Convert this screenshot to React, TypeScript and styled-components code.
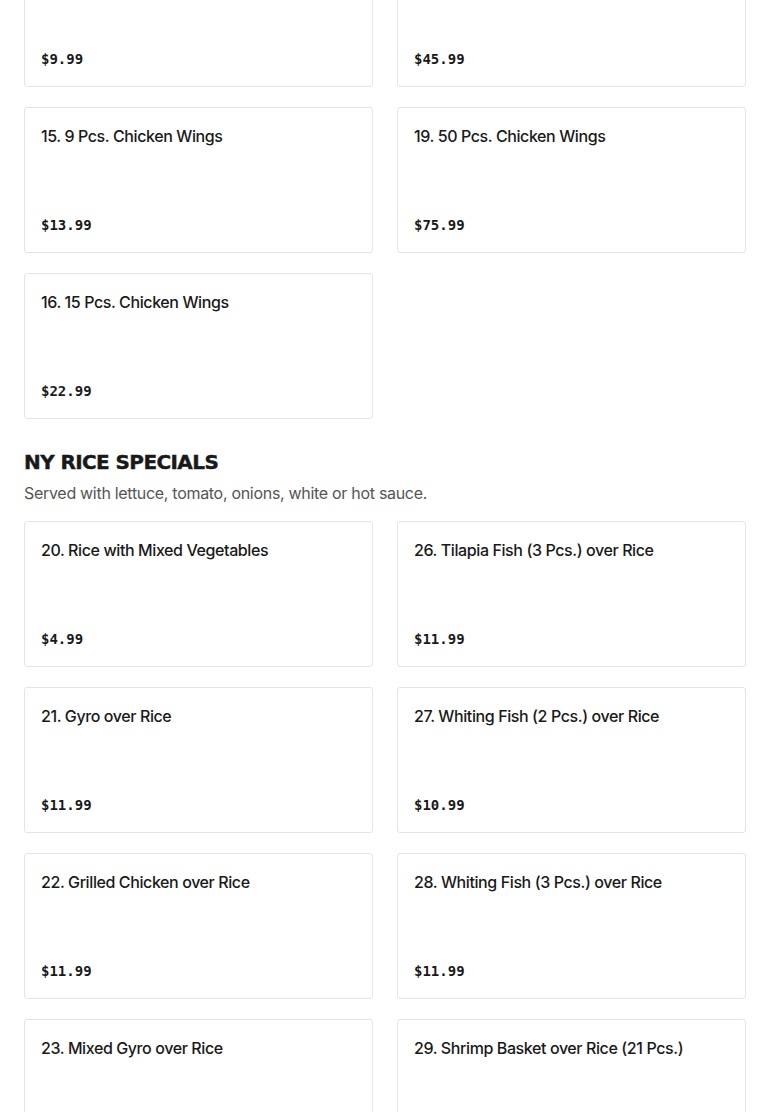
import React from "react";
import styled, { createGlobalStyle } from "styled-components";

const GlobalStyle = createGlobalStyle`
  html, body { margin: 0; padding: 0; background: #ffffff; }
  body { font-family: Inter, "Noto Sans", sans-serif; color: #191919; }
  * { box-sizing: border-box; }
`;

const Page = styled.div`
  padding: 0 24px;
  margin-top: -59px;
  display: flex;
  flex-direction: column;
`;

const Section = styled.section<{ $first?: boolean }>`
  display: flex;
  flex-direction: column;
  margin-top: ${(p) => (p.$first ? "0" : "29px")};
`;

const Heading = styled.h2`
  margin: 0;
  font-family: "DejaVu Sans", sans-serif;
  font-weight: 700;
  font-size: 20px;
  line-height: 28px;
  letter-spacing: -0.6px;
  -webkit-text-stroke: 0.4px #191919;
  color: #191919;
  text-transform: uppercase;
`;

const Description = styled.p`
  margin: 5px 0 16px;
  font-size: 16px;
  line-height: 24px;
  letter-spacing: -0.3px;
  color: #555555;
`;

const Grid = styled.div`
  display: grid;
  grid-template-columns: 1fr 1fr;
  column-gap: 24px;
  row-gap: 20px;
`;

const Card = styled.div`
  height: 146px;
  border: 1px solid #e4e4e4;
  border-radius: 3px;
  padding: 16px 16px 15px;
  display: flex;
  flex-direction: column;
  justify-content: space-between;
  background: #fff;
`;

const Title = styled.div`
  font-size: 16px;
  line-height: 24px;
  font-weight: 500;
  letter-spacing: -0.4px;
  color: #191919;
`;

const Price = styled.div`
  font-family: "DejaVu Sans Mono", "Liberation Mono", monospace;
  font-weight: 700;
  font-size: 14px;
  line-height: 24px;
  color: #191919;
`;

type Item = { name: string; price: string } | null;

const wings: Item[] = [
  { name: "", price: "$9.99" },
  { name: "", price: "$45.99" },
  { name: "15. 9 Pcs. Chicken Wings", price: "$13.99" },
  { name: "19. 50 Pcs. Chicken Wings", price: "$75.99" },
  { name: "16. 15 Pcs. Chicken Wings", price: "$22.99" },
];

const rice: Item[] = [
  { name: "20. Rice with Mixed Vegetables", price: "$4.99" },
  { name: "26. Tilapia Fish (3 Pcs.) over Rice", price: "$11.99" },
  { name: "21. Gyro over Rice", price: "$11.99" },
  { name: "27. Whiting Fish (2 Pcs.) over Rice", price: "$10.99" },
  { name: "22. Grilled Chicken over Rice", price: "$11.99" },
  { name: "28. Whiting Fish (3 Pcs.) over Rice", price: "$11.99" },
  { name: "23. Mixed Gyro over Rice", price: "$11.99" },
  { name: "29. Shrimp Basket over Rice (21 Pcs.)", price: "$13.99" },
];

const renderCards = (items: Item[]) =>
  items.map((it, i) =>
    it ? (
      <Card key={i}>
        <Title>{it.name}</Title>
        <Price>{it.price}</Price>
      </Card>
    ) : null
  );

export default function App() {
  return (
    <>
      <GlobalStyle />
      <Page>
        <Section $first>
          <Grid>{renderCards(wings)}</Grid>
        </Section>
        <Section>
          <Heading>NY Rice Specials</Heading>
          <Description>Served with lettuce, tomato, onions, white or hot sauce.</Description>
          <Grid>{renderCards(rice)}</Grid>
        </Section>
      </Page>
    </>
  );
}
